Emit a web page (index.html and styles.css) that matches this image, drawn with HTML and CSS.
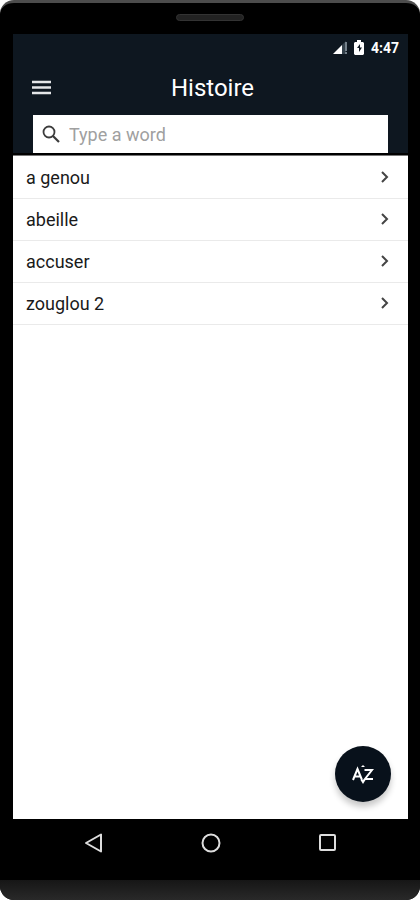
FILE: index.html
```html
<!DOCTYPE html>
<html lang="fr">

<head>
    <title>Histoire</title>
    <meta charset="utf-8">
    <meta content="width=device-width, initial-scale=1" name="viewport">
    <link rel="stylesheet" href="styles.css">
</head>

<body>
    <div id="phone">
        <div id="speaker"><span></span></div>

        <div id="screen">
            <header>
                <div id="status">
                    <svg width="14" height="13" viewBox="0 0 14 13">
                        <path d="M9 4 13 0V13H9z" fill="#34414b" />
                        <path d="M0 13 9 4V13z" fill="#fff" />
                        <path d="M12 1h2v9h-2zM12 11h2v2h-2z" fill="#74808a" />
                    </svg>
                    <svg width="10" height="15" viewBox="0 0 10 15">
                        <path d="M3 0h4v2h2l1 1v11l-1 1H1l-1-1V3l1-1h2z" fill="#fff" />
                        <path d="M6 4 3 8h2v4l3-4.500H6z" fill="#0f1822" />
                    </svg>
                    <span>4:47</span>
                </div>
                <div id="toolbar">
                    <button id="menu" aria-label="Menu">
                        <svg width="20" height="16" viewBox="0 0 20 16">
                            <path d="M1 2h19M1 7.5h19M1 13h19" stroke="#e4e6e8" stroke-width="2.6" />
                        </svg>
                    </button>
                    <h1>Histoire</h1>
                </div>
                <label id="search">
                    <svg width="18" height="18" viewBox="0 0 18 18" fill="none" stroke="#3c3c3c">
                        <circle cx="7" cy="7" r="5.5" stroke-width="1.8" />
                        <path d="M11 11l6 6" stroke-width="2.2" />
                    </svg>
                    <input type="text" placeholder="Type a word" aria-label="Type a word">
                </label>
            </header>

            <ul id="words">
                <li><a href="#">a genou <svg class="chevron" viewBox="0 0 8 14"><path d="M1 1l5 5-5 5" /></svg></a></li>
                <li><a href="#">abeille <svg class="chevron" viewBox="0 0 8 14"><path d="M1 1l5 5-5 5" /></svg></a></li>
                <li><a href="#">accuser <svg class="chevron" viewBox="0 0 8 14"><path d="M1 1l5 5-5 5" /></svg></a></li>
                <li><a href="#">zouglou 2 <svg class="chevron" viewBox="0 0 8 14"><path d="M1 1l5 5-5 5" /></svg></a></li>
            </ul>

            <button id="sort" aria-label="Sort from A to Z">
                <svg width="22" height="22" viewBox="0 0 22 22" fill="none" stroke="#fff">
                    <path d="M1 17 5.5 6 10 17M2.5 13.5h6" stroke-width="2" />
                    <path d="M12.5 7h7.500L13 16h8" stroke-width="2" />
                    <path d="M9 4 11 2 13 4zM8.500 17h5L11 21z" fill="#fff" stroke="none" />
                </svg>
            </button>
        </div>

        <nav>
            <button aria-label="Back">
                <svg width="20" height="20" viewBox="0 0 20 20"><path d="M17 1.5v17L2 10z" /></svg>
            </button>
            <button aria-label="Home">
                <svg width="20" height="20" viewBox="0 0 20 20"><circle cx="10" cy="10" r="8.5" /></svg>
            </button>
            <button aria-label="Recent apps">
                <svg width="20" height="20" viewBox="0 0 20 20"><rect x="2" y="2" width="15" height="15" rx="1" /></svg>
            </button>
        </nav>

        <div id="chin"></div>
    </div>
</body>

</html>
```

FILE: styles.css
```css
* {
    box-sizing: border-box;
    margin: 0;
    padding: 0;
}

html,
body {
    background: white;
    font-family: Roboto, 'Liberation Sans', sans-serif;
    height: 100%;
}

button {
    background: none;
    border: none;
    cursor: pointer;
}

svg {
    display: block;
    flex: none;
}

#phone {
    background: black;
    border-radius: 14px;
    border-top: 3px solid #4c4c4c;
    display: flex;
    flex-direction: column;
    min-height: 100%;
    overflow: hidden;
}

#speaker {
    display: flex;
    height: 31px;
    justify-content: center;
    padding-top: 11px;
}

#speaker span {
    background: #222;
    border: 1px solid #333;
    border-radius: 4px;
    height: 7px;
    width: 68px;
}

#screen {
    background: white;
    display: flex;
    flex: 1;
    flex-direction: column;
    margin: 0 12px 0 13px;
    position: relative;
}

header {
    background: #0e1720;
    border-bottom: 2px solid black;
}

#status {
    align-items: center;
    color: white;
    display: flex;
    font-size: 14px;
    font-weight: 700;
    gap: 7px;
    height: 27px;
    justify-content: flex-end;
    padding-right: 9px;
}

#toolbar {
    align-items: center;
    display: grid;
    grid-template-columns: 56px 1fr 52px;
    height: 54px;
}

#menu {
    padding: 0 18px;
}

#toolbar h1 {
    color: white;
    font-size: 24px;
    font-weight: 400;
    text-align: center;
}

#search {
    align-items: center;
    background: white;
    display: flex;
    gap: 9px;
    height: 38px;
    margin: 0 20px;
    padding: 0 9px;
}

#search input {
    background: none;
    border: none;
    color: #222;
    flex: 1;
    font-family: inherit;
    font-size: 18px;
    min-width: 0;
    outline: none;
}

#search input::placeholder {
    color: #a0a0a0;
}

#words {
    border-top: 1px solid #777;
    list-style: none;
    padding-top: 1px;
}

#words a {
    align-items: center;
    border-bottom: 1px solid #eaeaea;
    color: #1a1a1a;
    display: flex;
    font-size: 18px;
    height: 42px;
    justify-content: space-between;
    padding: 0 19px 0 13px;
    text-decoration: none;
}

.chevron {
    fill: none;
    height: 14px;
    stroke: #444;
    stroke-width: 2;
    width: 8px;
}

#sort {
    align-items: center;
    background: #08111b;
    border-radius: 50%;
    bottom: 17px;
    box-shadow: 0 5px 6px rgba(0, 0, 0, 0.22);
    display: flex;
    height: 56px;
    justify-content: center;
    position: absolute;
    right: 17px;
    width: 56px;
}

nav {
    align-items: center;
    display: flex;
    height: 61px;
    justify-content: space-around;
    padding: 0 34px 13px 36px;
}

nav svg {
    fill: none;
    stroke: #ddd;
    stroke-linejoin: round;
    stroke-width: 2;
}

#chin {
    background: linear-gradient(#161616, #292929);
    height: 20px;
}
```
